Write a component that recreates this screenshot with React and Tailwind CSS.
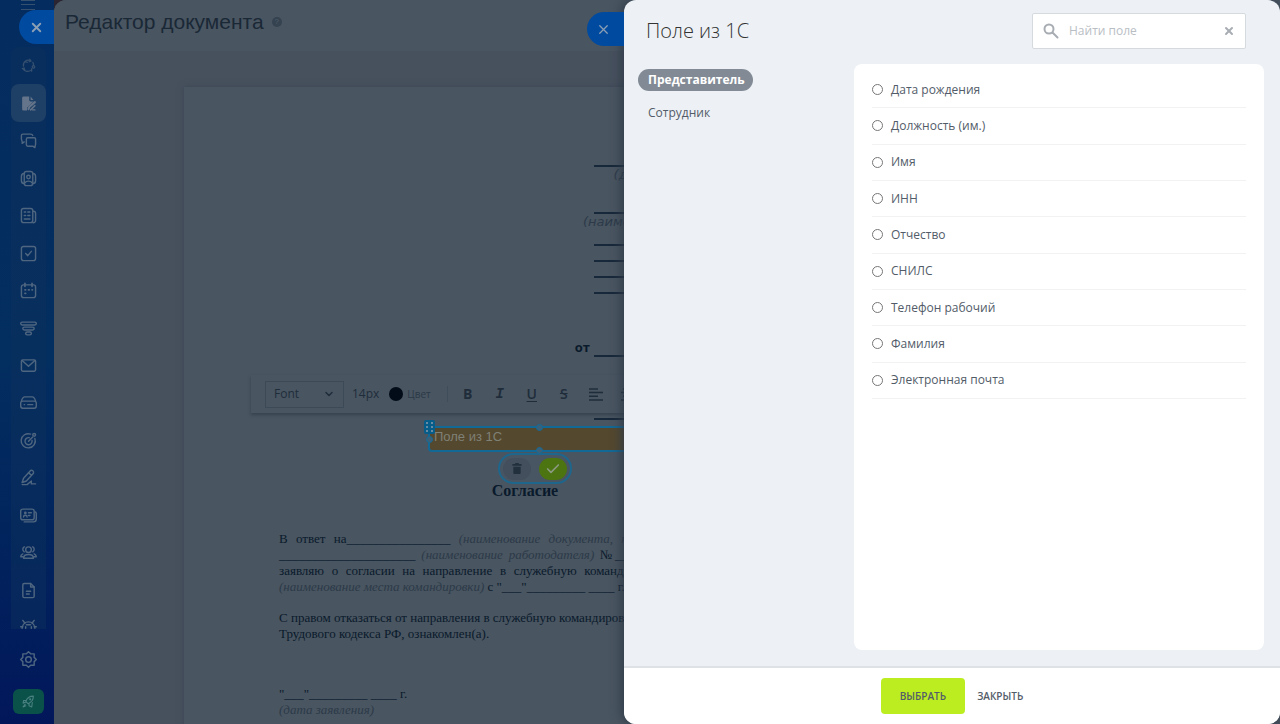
import React from 'react';
import { Check, ChevronDown, X } from 'lucide-react';

const Icon = ({ children, className = 'size-[18px]' }) => (
  <svg
    viewBox="0 0 24 24"
    className={className}
    fill="none"
    stroke="currentColor"
    strokeWidth="2"
    strokeLinecap="round"
    strokeLinejoin="round"
    aria-hidden="true"
  >
    {children}
  </svg>
);

const menu = [
  {
    name: 'Автоматизация',
    dim: true,
    icon: (
      <>
        <path d="M4 13a8 8 0 0 1 11-9M19 7a8 8 0 0 1 1 5M3 17c3 5 9 6 14 2" />
        <path d="M7 6l3 1M14 2l2 3-3 1M2 17l3-1 1 3M17 17v4" />
        <circle cx="20" cy="14" r="2" />
      </>
    ),
  },
  {
    name: 'Документы',
    active: true,
    icon: (
      <>
        <path
          d="M3 4a2 2 0 0 1 2-2h8v5a2 2 0 0 0 2 2h4l-9 9v4H5a2 2 0 0 1-2-2z"
          fill="currentColor"
          stroke="none"
        />
        <path d="M15 2l4 5h-4z" fill="currentColor" stroke="none" />
        <path d="M12 20l1-3 8-7" strokeWidth="3" />
        <path d="M15 21l6-6M18 21h3" />
      </>
    ),
  },
  {
    name: 'Чаты',
    icon: (
      <>
        <path d="M6 14l-3 2c1-3-1-4-1-6V5a2 2 0 0 1 2-2h11a3 3 0 0 1 3 2" />
        <path d="M11 8h9a2 2 0 0 1 2 2v7l-1 5-3-2h-7a2 2 0 0 1-2-2v-8a2 2 0 0 1 2-2z" />
      </>
    ),
  },
  {
    name: 'Группы',
    icon: (
      <>
        <rect x="6" y="2" width="12" height="20" rx="3" />
        <path d="M6 5a4 4 0 0 0-4 4v6a4 4 0 0 0 4 4M18 5a4 4 0 0 1 4 4v6a4 4 0 0 1-4 4" />
        <circle cx="12" cy="10" r="2.5" />
        <path d="M7 18c2-3 8-3 10 0" />
      </>
    ),
  },
  {
    name: 'Новости',
    icon: (
      <>
        <rect x="2" y="2" width="16" height="20" rx="3" />
        <path d="M18 6h1a3 3 0 0 1 3 3v10a3 3 0 0 1-4 3M6 7h2M11 7h3M6 12h2M11 12h3M6 17h8" />
      </>
    ),
  },
  {
    name: 'Задачи',
    icon: (
      <>
        <rect x="2" y="2" width="20" height="20" rx="3" />
        <path d="M8 12l3 3 5-6" />
      </>
    ),
  },
  {
    name: 'Календарь',
    icon: (
      <>
        <rect x="2" y="4" width="20" height="18" rx="3" />
        <path d="M7 2v4M17 2v4M7 11h1M12 11h1M17 11h.5M7 16h1" strokeWidth="2.5" />
      </>
    ),
  },
  {
    name: 'Воронка',
    icon: (
      <>
        <rect x="1" y="3" width="22" height="4" rx="2" />
        <rect x="4" y="10" width="16" height="4" rx="2" />
        <rect x="8" y="17" width="8" height="4" rx="2" />
      </>
    ),
  },
  {
    name: 'Почта',
    icon: (
      <>
        <rect x="2" y="4" width="20" height="16" rx="2" />
        <path d="M3 5l9 8 9-8" />
      </>
    ),
  },
  {
    name: 'Диск',
    icon: (
      <>
        <rect x="1" y="10" width="22" height="10" rx="3" />
        <path d="M2 10c1-4 2-6 5-6h10c3 0 4 2 5 6M6 15h.5M11 15h7" />
      </>
    ),
  },
  {
    name: 'Цели',
    icon: (
      <>
        <path d="M15 3a10 10 0 1 0 6 6" />
        <path d="M13 8a5 5 0 1 0 4 4M12 13l6-6" />
        <circle cx="20" cy="4" r="2" />
      </>
    ),
  },
  {
    name: 'Подпись',
    icon: <path d="M3 19l2-6L15 2c2-1 5 1 4 4L9 17l-6 2zM12 5l4 4M3 22h7l6-5v4l6 0" />,
  },
  {
    name: 'Контакты',
    icon: (
      <>
        <rect x="1" y="3" width="19" height="15" rx="3" />
        <path d="M22 7c1 1 1 2 1 3v7a4 4 0 0 1-4 4H6M12 8h4M12 12h2M5 14c0-3 5-3 5 0" />
        <circle cx="7.500" cy="8.500" r="1" />
      </>
    ),
  },
  {
    name: 'Сотрудники',
    icon: (
      <>
        <circle cx="12" cy="8" r="4" />
        <path d="M5 20c0-7 14-7 14 0zM6 4a4 4 0 0 0 0 7M18 4a4 4 0 0 1 0 7M4 14c-2 1-3 2-3 4h3M20 14c2 1 3 2 3 4h-3" />
      </>
    ),
  },
  {
    name: 'Файлы',
    icon: (
      <>
        <path d="M4 4a2 2 0 0 1 2-2h9l5 5v13a2 2 0 0 1-2 2H6a2 2 0 0 1-2-2z" />
        <path d="M15 2v5h5M9 13h6M9 17h4" />
      </>
    ),
  },
];

const fields = [
  'Дата рождения',
  'Должность (им.)',
  'Имя',
  'ИНН',
  'Отчество',
  'СНИЛС',
  'Телефон рабочий',
  'Фамилия',
  'Электронная почта',
];

const Sidebar = () => (
  <nav className="flex w-[54px] shrink-0 flex-col items-center bg-gradient-to-b from-[#052c5e] via-[#032e60] to-[#02175a] pb-[10px] pl-[2px] text-[#4f6680]">
    <svg viewBox="0 0 14 10" className="h-[10px] w-[14px] shrink-0" stroke="#36506f" strokeWidth="1">
      <path d="M0 .5h14M0 4.500h14M0 9.500h14" />
    </svg>
    <button
      type="button"
      aria-label="Закрыть редактор"
      className="flex h-[34px] w-[35px] shrink-0 items-center justify-center self-end rounded-l-full bg-[#004a9f] text-[#8b9fb5]"
    >
      <X className="size-[15px]" strokeWidth={3} />
    </button>

    <div className="mt-[3px] flex w-[35px] flex-1 flex-col rounded-t-lg bg-[#0b305c]/50">
      {menu.map(({ name, icon, active, dim }) => (
        <a
          key={name}
          href="#"
          aria-label={name}
          className={
            active
              ? 'flex flex-1 items-center justify-center rounded-lg bg-[#1f4066] text-[#64748a]'
              : dim
                ? 'flex flex-1 items-center justify-center text-[#36506f]'
                : 'flex flex-1 items-center justify-center'
          }
        >
          <Icon className={dim ? 'size-[15px]' : 'size-[17px]'}>{icon}</Icon>
        </a>
      ))}
      <a href="#" aria-label="Приложения" className="flex h-5 shrink-0 justify-center overflow-hidden pt-[10px]">
        <Icon className="size-[17px] shrink-0">
          <path d="M4 2l3 4M20 2l-3 4M3 13c1-12 17-12 18 0M1 11h3M20 11h3M8 11v2M16 11v2M9 8h6" />
        </Icon>
      </a>
    </div>

    <a href="#" aria-label="Настройки" className="flex h-[60px] items-center">
      <Icon className="size-[17px]">
        <circle cx="12" cy="12" r="4" />
        <path d="M12 1l3 3h5v5l3 3-3 3v5h-5l-3 3-3-3H4v-5l-3-3 3-3V4h5z" />
      </Icon>
    </a>
    <button
      type="button"
      aria-label="Быстрый старт"
      className="flex h-[25px] w-[31px] items-center justify-center rounded-md bg-[#0a5149] text-[#4a8181]"
    >
      <Icon className="size-[13px]">
        <path d="M7 12c2-6 7-10 14-10 0 7-4 12-10 14zM8 10H3l-1 5 5-2M13 15v5l5 2 1-8M6 17l-4 5 5-2" />
        <circle cx="15" cy="8" r="1" />
      </Icon>
    </button>
  </nav>
);

const Toolbar = () => (
  <div className="absolute top-[288px] left-[67px] flex h-[38px] w-[560px] items-center bg-[#495561] pl-3.5 font-['Open_Sans','Noto_Sans',sans-serif] text-[#1f2d3b] shadow-[0_2px_3px_#36424f]">
    <button
      type="button"
      className="flex h-[27px] w-[79px] items-center justify-between border border-[#3c4a58] px-2 text-[12px]"
    >
      Font
      <ChevronDown className="size-3" strokeWidth={3} />
    </button>
    <span className="ml-2 text-[12px]">14px</span>
    <button type="button" className="ml-2.5 flex items-center gap-1 text-[10px] text-[#2b3947]">
      <span className="size-[14px] rounded-full bg-[#020c18]" />
      Цвет
    </button>
    <span className="ml-4 h-4 w-px bg-[#3f4c59]" />
    <div className="flex items-center text-sm font-semibold">
      <button type="button" className="ml-1 w-8 font-bold">B</button>
      <button type="button" className="w-8 font-['Liberation_Mono',monospace] font-bold italic">I</button>
      <button type="button" className="w-8 underline underline-offset-2">U</button>
      <button type="button" className="w-8 line-through">S</button>
      <button type="button" aria-label="По левому краю" className="ml-[9px]">
        <svg viewBox="0 0 14 13" className="h-[13px] w-[14px]" stroke="currentColor" strokeWidth="1.500">
          <path d="M0 1h9M0 4.600h14M0 8.200h9M0 12h14" />
        </svg>
      </button>
      <button type="button" aria-label="По центру" className="ml-[18px]">
        <svg viewBox="0 0 14 13" className="h-[13px] w-[14px]" stroke="currentColor" strokeWidth="1.500">
          <path d="M2 1h9M0 4.600h14M2 8.200h9M0 12h14" />
        </svg>
      </button>
    </div>
  </div>
);

const Handle = ({ className }) => (
  <span className={`absolute size-[7px] rounded-full border border-[#136b98] bg-[#3c6078] ${className}`} />
);

// Draggable field placed on the document
const PlacedField = () => (
  <div className="absolute top-[339px] left-[244px] h-[26px] w-[222px] rounded-b-sm border-2 border-[#126996] bg-[#54482e] pl-1 font-['Liberation_Sans',sans-serif] text-[13px] leading-[18px] text-[#7f8076]">
    Поле из 1С
    <span className="absolute -top-2 -left-[6px] flex h-[14px] w-[11px] items-center justify-center rounded-xs bg-[#075d8a]">
      <svg viewBox="0 0 7 10" className="h-[10px] w-[7px]" fill="#668ba3">
        <path d="M0 0h2v2H0zM5 0h2v2H5zM0 4h2v2H0zM5 4h2v2H5zM0 8h2v2H0zM5 8h2v2H5z" />
      </svg>
    </span>
    <Handle className="top-2 -left-1" />
    <Handle className="-top-1 left-[106px]" />
    <Handle className="-bottom-1 left-[106px]" />
    <div className="absolute top-[25px] left-[68px] flex h-[31px] w-[74px] items-center justify-center gap-2 rounded-full border-2 border-[#1f668c] bg-[#485562]">
      <button
        type="button"
        aria-label="Удалить"
        className="flex h-[22px] w-7 items-center justify-center rounded-full bg-[#434f5c] text-[#222f3c]"
      >
        <svg viewBox="0 0 10 12" className="h-[11px] w-[10px]" fill="currentColor">
          <path d="M3 0h4v1h3v2H0V1h3zM1 4h8v7a1 1 0 0 1-1 1H2a1 1 0 0 1-1-1z" />
        </svg>
      </button>
      <button
        type="button"
        aria-label="Готово"
        className="flex h-[22px] w-7 items-center justify-center rounded-full bg-[#4c7410] text-[#8b9a80]"
      >
        <Check className="size-4" strokeWidth={2.5} />
      </button>
    </div>
  </div>
);

const Hint = ({ children }) => <i className="font-normal text-[#2c3a49]">{children}</i>;

const Document = () => (
  <article className="relative ml-[130px] h-[1000px] w-[682px] bg-[#495560] px-[95px] pt-[78px] font-['Liberation_Serif',serif] text-[13px] leading-4 text-[#091a2c] shadow-[0_0_6px_#3b4654]">
    <div className="ml-auto w-[177px] font-['DejaVu_Sans',sans-serif]">
      <div className="border-b-2 border-[#17283a]" />
      <p className="flex h-[45px] justify-center whitespace-nowrap"><Hint>(должность, Ф.И.О.)</Hint></p>
      <div className="border-b-2 border-[#17283a]" />
      <p className="flex h-[30px] justify-center whitespace-nowrap"><Hint>(наименование учреждения)</Hint></p>
      <div className="border-b-2 border-[#17283a]" />
      <div className="h-4 border-b-2 border-[#17283a]" />
      <div className="h-4 border-b-2 border-[#17283a]" />
      <div className="h-4 border-b-2 border-[#17283a]" />
      <div className="relative h-[63px] border-b-2 border-[#17283a]">
        <b className="absolute right-full bottom-0 pr-1 font-['Open_Sans','Noto_Sans',sans-serif]">от</b>
      </div>
      <div className="h-[63px] border-b-2 border-[#17283a]" />
    </div>

    <h2 className="mt-[61px] text-center text-base leading-5 font-bold">Согласие</h2>

    <div className="mt-[30px] text-justify [text-align-last:justify]">
      <p>В ответ на________________ <Hint>(наименование документа, номер, дата, реквизиты)</Hint></p>
      <p>_____________________ <Hint>(наименование работодателя)</Hint> №________________________</p>
      <p>заявляю о согласии на направление в служебную командировку в организацию г.</p>
    </div>
    <p className="whitespace-nowrap"><Hint>(наименование места командировки)</Hint> с "___"_________ ____ г.</p>
    <div className="mt-[15px]">
      <p className="whitespace-nowrap">С правом отказаться от направления в служебную командировку, согласно ст. 259</p>
      <p>Трудового кодекса РФ, ознакомлен(а).</p>
    </div>
    <div className="mt-[44px]">
      <p>"___"_________ ____ г.</p>
      <p><Hint>(дата заявления)</Hint></p>
    </div>

    <Toolbar />
    <PlacedField />
  </article>
);

const Editor = () => (
  <main className="flex min-w-0 flex-1 flex-col overflow-hidden rounded-tl-xl bg-[#47515e]">
    <header className="flex h-[51px] shrink-0 items-center gap-2 bg-[#495561] pb-2 pl-[11px]">
      <h1 className="font-['Liberation_Sans',sans-serif] text-[21px] text-[#1a2836]">Редактор документа</h1>
      <span className="flex size-[10px] items-center justify-center rounded-full bg-[#35424f] font-['Liberation_Sans',sans-serif] text-[8px] text-[#52606d]">?</span>
    </header>
    <div className="min-h-0 flex-1 overflow-hidden pt-9">
      <Document />
    </div>
  </main>
);

const FieldDrawer = () => (
  <aside className="absolute inset-y-0 right-0 flex w-[656px] flex-col rounded-xl bg-[#edf1f5] font-['Open_Sans','Noto_Sans',sans-serif] text-[12px] text-[#525c69] shadow-[-2px_0_12px_#2f3a48]">
    <button
      type="button"
      aria-label="Закрыть панель"
      className="absolute top-3 right-full flex h-[34px] w-[37px] items-center justify-center rounded-l-full bg-[#004a9f] pr-1 text-[#8b9fb5]"
    >
      <X className="size-[15px]" strokeWidth={2} />
    </button>

    <header className="flex h-16 shrink-0 items-center justify-between pr-[34px] pb-[3px] pl-[22px]">
      <h2 className="text-xl font-light text-[#333333]">Поле из 1С</h2>
      <div className="flex h-9 w-[214px] items-center rounded-xs border border-[#d5dadf] bg-white px-2.5 text-[#a8adb4]">
        <svg viewBox="0 0 16 16" className="size-4 shrink-0" fill="none" stroke="currentColor" strokeWidth="2">
          <circle cx="6" cy="6" r="4.500" />
          <path d="M9.500 9.500l5 5" strokeLinecap="round" />
        </svg>
        <input
          type="text"
          aria-label="Найти поле"
          placeholder="Найти поле"
          className="ml-2.5 min-w-0 flex-1 outline-none placeholder:text-[#b9bec4]"
        />
        <button type="button" aria-label="Очистить">
          <X className="size-3" strokeWidth={4} />
        </button>
      </div>
    </header>

    <div className="flex min-h-0 flex-1 gap-4 pr-4 pb-4 pl-3.5">
      <nav className="flex w-[200px] flex-col items-start gap-[11px] pt-[5px]">
        <button type="button" className="h-[22px] rounded-full bg-[#828b95] px-2 pl-2.5 font-bold text-white">
          Представитель
        </button>
        <button type="button" className="h-[22px] px-2.5">Сотрудник</button>
      </nav>
      <section className="flex-1 rounded-lg bg-white px-[18px] pt-2">
        <ul className="grid h-[327px] auto-rows-fr">
          {fields.map((name) => (
            <li key={name} className="border-b border-[#f0f2f4]">
              <label className="flex h-full items-center gap-2">
                <input
                  type="radio"
                  name="field"
                  className="size-[11px] appearance-none rounded-full border border-[#767676] bg-white"
                />
                {name}
              </label>
            </li>
          ))}
        </ul>
      </section>
    </div>

    <footer className="flex h-[58px] shrink-0 items-center justify-center gap-3 rounded-b-xl border-t-2 border-[#dfe2e5] bg-white text-[10px] font-semibold text-[#535c69]">
      <button type="button" className="h-9 rounded-sm bg-[#bbed21] px-[19px]">ВЫБРАТЬ</button>
      <button type="button">ЗАКРЫТЬ</button>
    </footer>
  </aside>
);

const App = () => (
  <div className="relative flex h-screen overflow-hidden bg-[#2a2530]">
    <Sidebar />
    <Editor />
    <FieldDrawer />
  </div>
);

export default App;
